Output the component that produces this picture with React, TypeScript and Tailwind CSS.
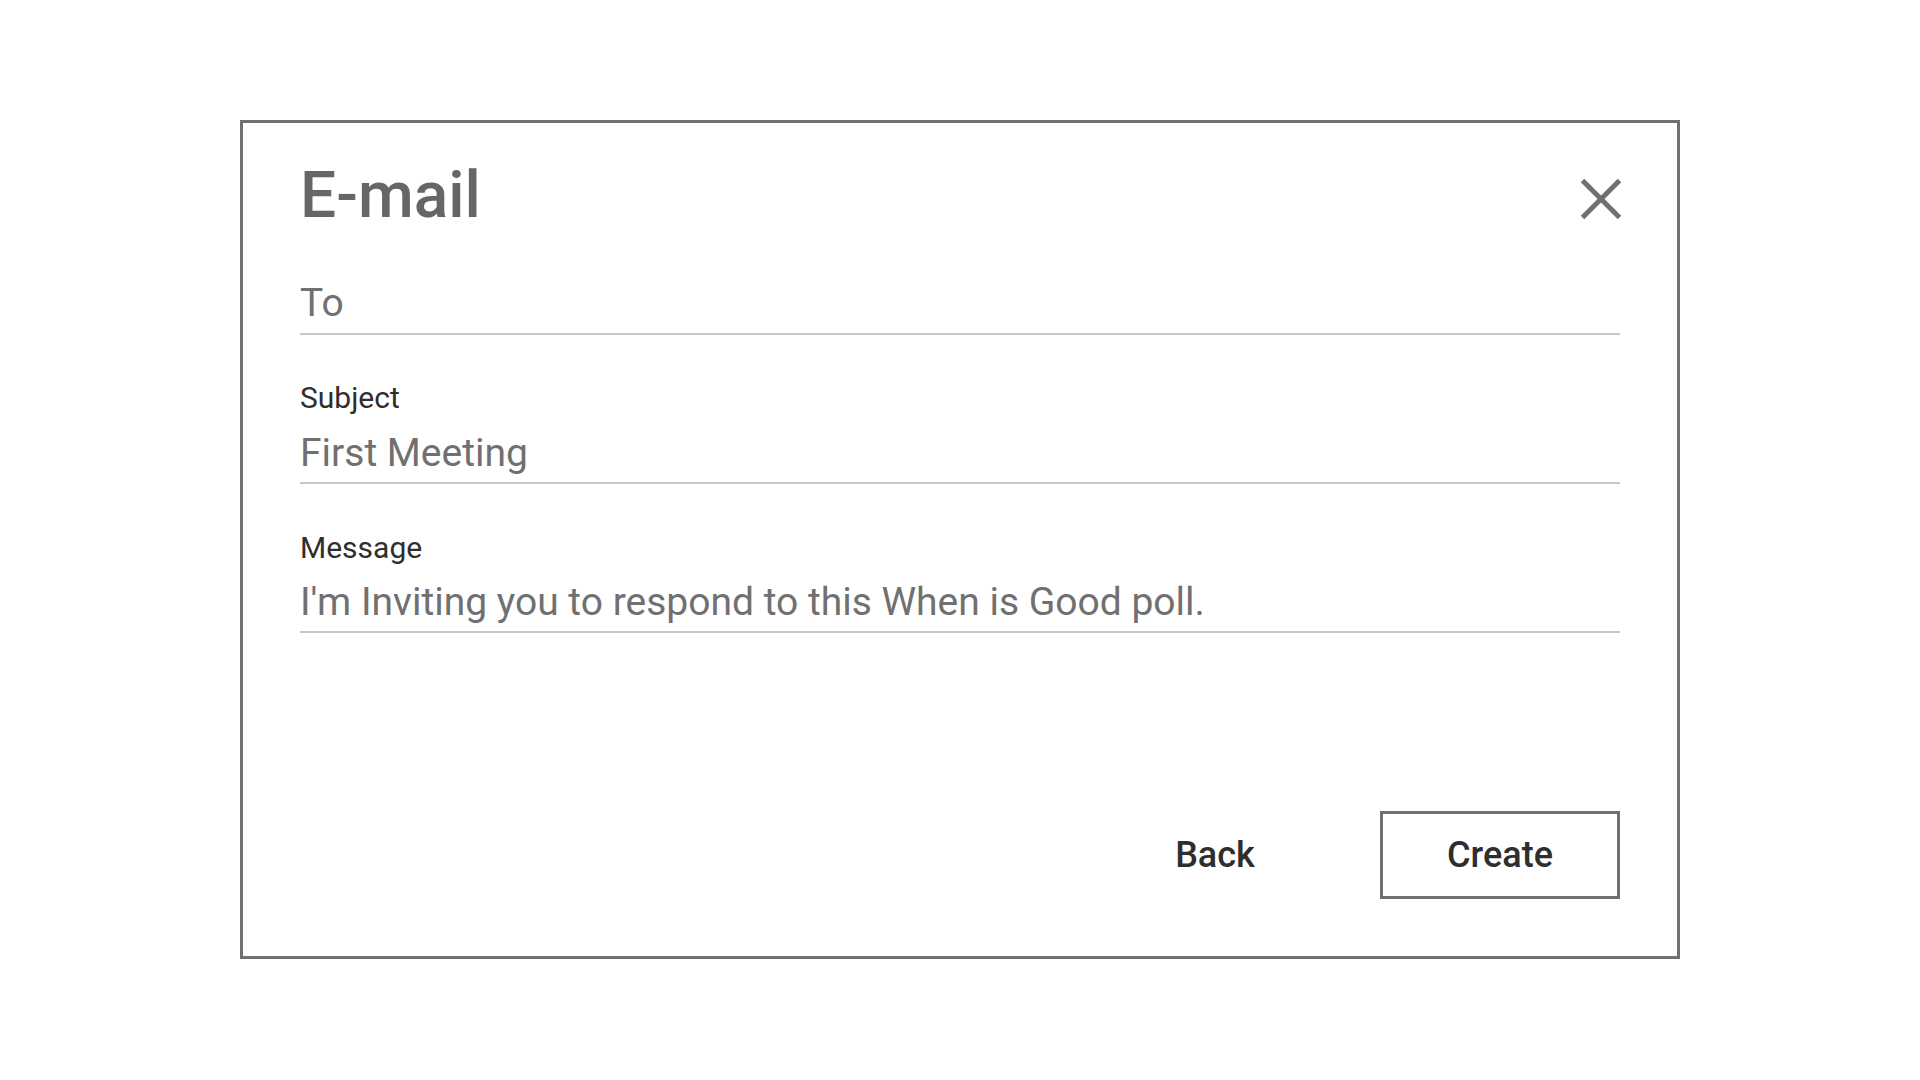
import React from "react";

function CloseIcon() {
  return (
    <svg width="42" height="42" viewBox="0 0 42 42" className="block">
      <line x1="2.5" y1="2.5" x2="39.5" y2="39.5" stroke="#707070" strokeWidth="5" />
      <line x1="39.5" y1="2.5" x2="2.5" y2="39.5" stroke="#707070" strokeWidth="5" />
    </svg>
  );
}

export default function App() {
  return (
    <div
      className="w-full min-h-screen bg-white flex justify-center items-start pt-[120px]"
      style={{ fontFamily: "Roboto, 'Liberation Sans', sans-serif" }}
    >
      <div className="w-[1440px] border-[3px] border-[#707070] bg-white px-[57px] pt-[40px] pb-[57px] flex flex-col">
        <div className="flex justify-between items-start">
          <h1 className="text-[64px] leading-[66px] font-medium text-[#666666]">E-mail</h1>
          <button className="mt-[15px] mr-[-2px]" aria-label="Close">
            <CloseIcon />
          </button>
        </div>

        <div className="mt-[50px] pb-[6px] border-b-2 border-[#c8c8c8] text-[39px] leading-[48px] text-[#707070]">
          To
        </div>

        <div className="mt-[47px] text-[30px] leading-[32px] text-[#2e2e2e]">Subject</div>
        <div className="mt-[15px] pb-[5px] border-b-2 border-[#c8c8c8] text-[39px] leading-[48px] text-[#707070]">
          First Meeting
        </div>

        <div className="mt-[48px] text-[30px] leading-[32px] text-[#2e2e2e]">Message</div>
        <div className="mt-[14px] pb-[5px] border-b-2 border-[#c8c8c8] text-[39px] leading-[48px] text-[#707070]">
          I'm Inviting you to respond to this When is Good poll.
        </div>

        <div className="mt-[178px] flex justify-end items-center gap-[45px]">
          <button className="w-[240px] h-[88px] flex items-center justify-center text-[36px] leading-[40px] font-medium text-[#2e2e2e]">
            Back
          </button>
          <button className="w-[240px] h-[88px] border-[3px] border-[#707070] flex items-center justify-center text-[36px] leading-[40px] font-medium text-[#2e2e2e]">
            Create
          </button>
        </div>
      </div>
    </div>
  );
}
